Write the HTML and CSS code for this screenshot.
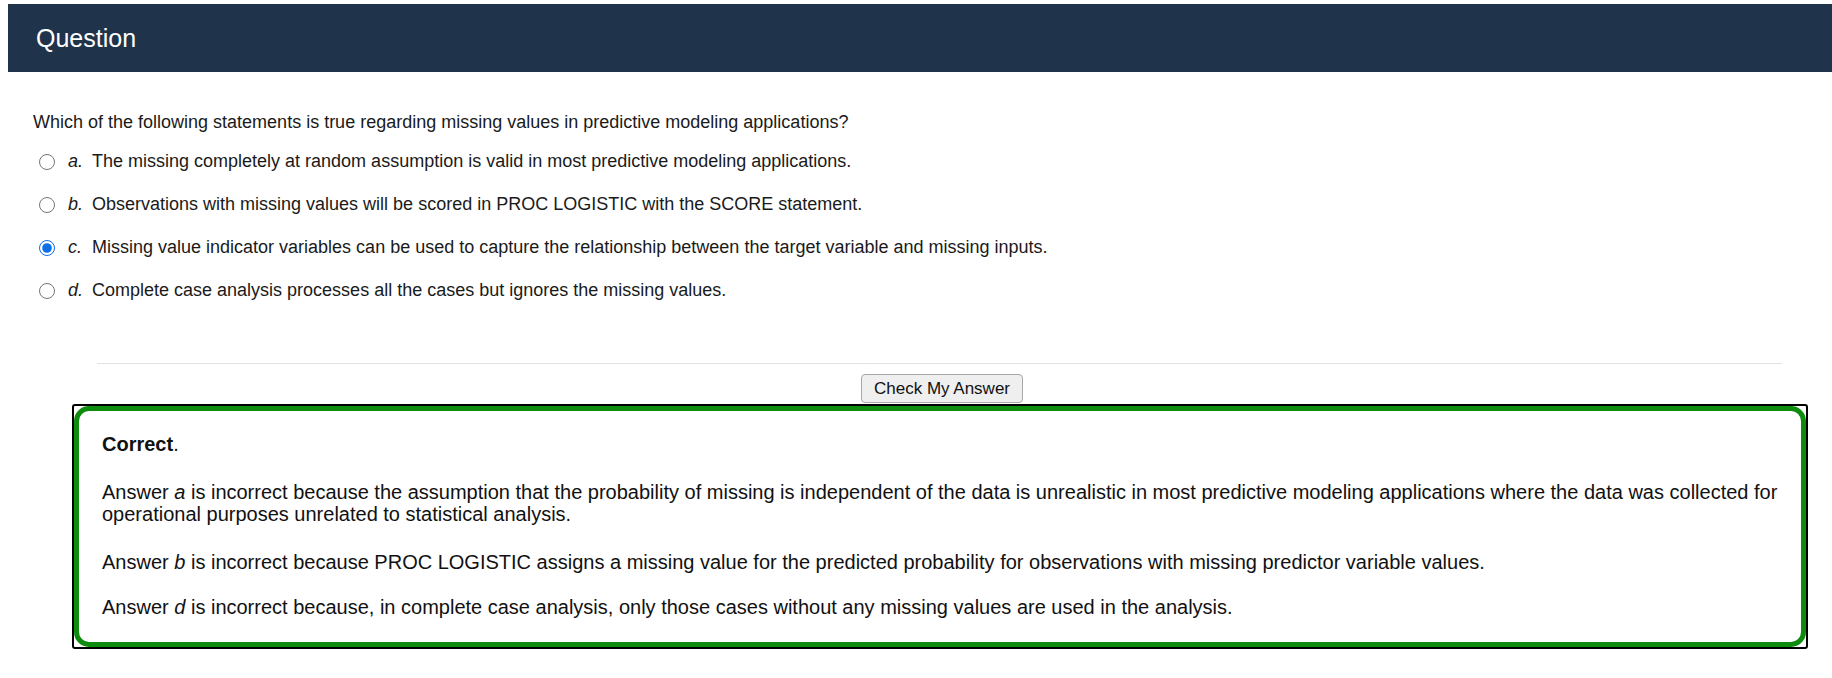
FILE: index.html
```html
<!DOCTYPE html>
<html lang="en">
<head>
<meta charset="utf-8">
<title>Question</title>
<link rel="stylesheet" href="styles.css">
</head>
<body>
<div class="header">Question</div>
<div class="question">
  <p class="stem">Which of the following statements is true regarding missing values in predictive modeling applications?</p>
  <div class="options">
    <label class="option"><input type="radio" name="q"><span class="letter">a.</span><span class="text">The missing completely at random assumption is valid in most predictive modeling applications.</span></label>
    <label class="option"><input type="radio" name="q"><span class="letter">b.</span><span class="text">Observations with missing values will be scored in PROC LOGISTIC with the SCORE statement.</span></label>
    <label class="option"><input type="radio" name="q" checked><span class="letter">c.</span><span class="text">Missing value indicator variables can be used to capture the relationship between the target variable and missing inputs.</span></label>
    <label class="option"><input type="radio" name="q"><span class="letter">d.</span><span class="text">Complete case analysis processes all the cases but ignores the missing values.</span></label>
  </div>
</div>
<div class="check">
  <div class="rule"></div>
  <div class="btnrow"><button class="btn" type="button">Check My Answer</button></div>
  <div class="feedback-outer">
    <div class="feedback">
      <p><b>Correct</b>.</p>
      <p>Answer <i>a</i> is incorrect because the assumption that the probability of missing is independent of the data is unrealistic in most predictive modeling applications where the data was collected for operational purposes unrelated to statistical analysis.</p>
      <p>Answer <i>b</i> is incorrect because PROC LOGISTIC assigns a missing value for the predicted probability for observations with missing predictor variable values.</p>
      <p class="last">Answer <i>d</i> is incorrect because, in complete case analysis, only those cases without any missing values are used in the analysis.</p>
    </div>
  </div>
</div>
</body>
</html>
```

FILE: styles.css
```css
html, body {
  margin: 0;
  padding: 0;
  background: #ffffff;
}
body {
  padding: 4px 0 0 8px;
  font-family: "Liberation Sans", Arial, sans-serif;
  color: #1a1a1a;
  overflow: hidden;
}
.header {
  height: 68px;
  background: #1f344b;
  color: #ffffff;
  font-size: 25px;
  display: flex;
  align-items: center;
  padding-left: 28px;
  box-sizing: border-box;
}
.question {
  padding-left: 25px;
}
.stem {
  margin: 40px 0 0 0;
  font-size: 18px;
  line-height: 20px;
}
.options {
  display: flex;
  flex-direction: column;
  margin-top: 8px;
}
.option {
  display: flex;
  align-items: center;
  height: 43px;
  font-size: 18px;
}
.option input {
  width: 16px;
  height: 16px;
  margin: 0 0 0 6px;
  accent-color: #0b6fe8;
}
.letter {
  font-style: italic;
  margin-left: 13px;
  width: 24px;
}
.check {
  margin: 51px 24px 0 64px;
}
.rule {
  height: 1px;
  background: #e2e2e2;
  margin: 0 26px 0 25px;
}
.btnrow {
  display: flex;
  justify-content: center;
  margin-top: 10px;
  padding-left: 4px;
}
.btn {
  font-family: "Liberation Sans", Arial, sans-serif;
  font-size: 17px;
  color: #111;
  background: #efefef;
  border: 1px solid #a8a8a8;
  border-radius: 4px;
  height: 29px;
  padding: 0 12px;
}
.feedback-outer {
  margin-top: 1px;
  border: 2px solid #000;
  border-radius: 3px;
}
.feedback {
  border: 5px solid #0d8c0d;
  border-radius: 15px;
  padding: 22px 20px 24px 23px;
  font-size: 20px;
  line-height: 22px;
  color: #111;
}
.feedback p {
  margin: 0 0 26px 0;
}
.feedback .last {
  margin: -3px 0 0 0;
}
```
